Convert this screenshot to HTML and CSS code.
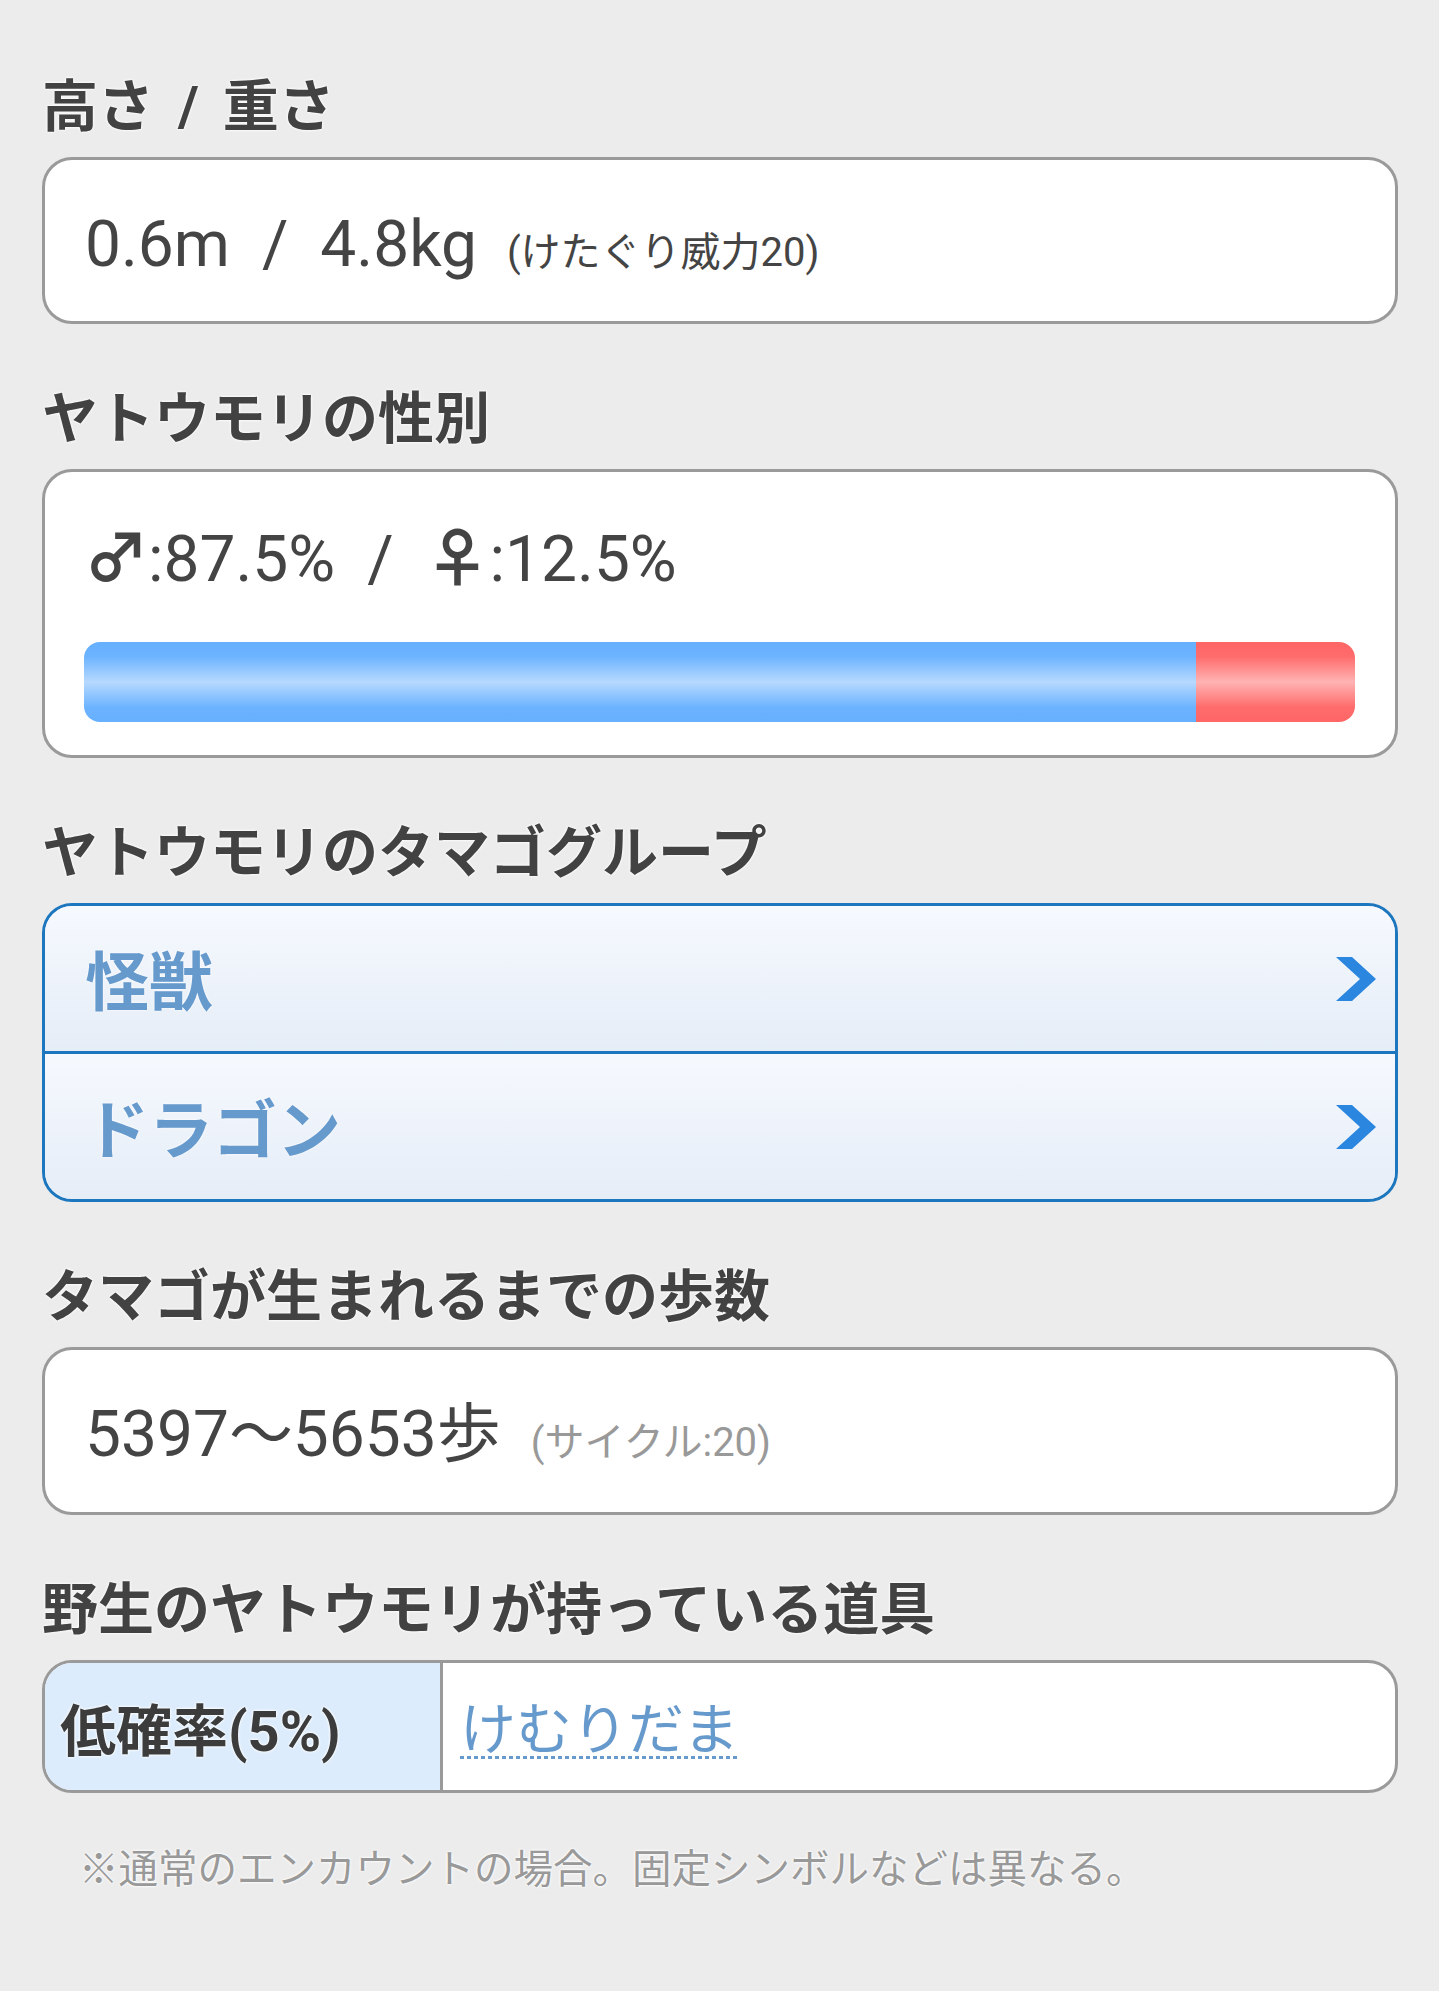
FILE: index.html
```html
<!DOCTYPE html>
<html lang="ja">
<head>
<meta charset="utf-8">
<title>ヤトウモリ</title>
<link rel="stylesheet" href="styles.css">
</head>
<body>
<div class="page">
  <section class="sec">
    <h2 class="head">高さ<span class="head-sep">/</span>重さ</h2>
    <div class="box box-text">
      <span>0.6m</span><span class="sep">/</span><span>4.8kg</span><span class="sub">(けたぐり威力20)</span>
    </div>
  </section>

  <section class="sec">
    <h2 class="head">ヤトウモリの性別</h2>
    <div class="box box-gender">
      <div class="gender-line"><span class="sym">♂</span><span>:87.5%</span><span class="sep gsep">/</span><span class="sym">♀</span><span>:12.5%</span></div>
      <div class="bar">
        <div class="bar-male" style="width:87.5%"></div>
        <div class="bar-female"></div>
      </div>
    </div>
  </section>

  <section class="sec">
    <h2 class="head">ヤトウモリのタマゴグループ</h2>
    <div class="box box-links">
      <a class="link-row" href="#">
        <span class="link-label">怪獣</span>
        <svg class="chev" width="40" height="44" viewBox="0 0 40 44"><polygon points="0,0 16,0 40,22 16,44 0,44 24,22" fill="#2b86e0"/></svg>
      </a>
      <a class="link-row" href="#">
        <span class="link-label">ドラゴン</span>
        <svg class="chev" width="40" height="44" viewBox="0 0 40 44"><polygon points="0,0 16,0 40,22 16,44 0,44 24,22" fill="#2b86e0"/></svg>
      </a>
    </div>
  </section>

  <section class="sec">
    <h2 class="head">タマゴが生まれるまでの歩数</h2>
    <div class="box box-text box-steps">
      <span>5397〜5653歩</span><span class="sub sub-gray">(サイクル:20)</span>
    </div>
  </section>

  <section class="sec">
    <h2 class="head">野生のヤトウモリが持っている道具</h2>
    <div class="box box-item">
      <div class="item-rate">低確率(5%)</div>
      <div class="item-name"><a class="item-link" href="#">けむりだま</a></div>
    </div>
  </section>

  <p class="note">※通常のエンカウントの場合。固定シンボルなどは異なる。</p>
</div>
</body>
</html>
```

FILE: styles.css
```css
html, body {
  margin: 0;
  padding: 0;
  background: #ececec;
}

body {
  font-family: Roboto, "Noto Sans CJK JP", sans-serif;
  color: #444;
}

.page {
  padding: 68px 41px 40px 42px;
}

.sec + .sec {
  margin-top: 56px;
}

.head {
  margin: 0 0 14px;
  padding-top: 3px;
  font-size: 56px;
  line-height: 72px;
  font-weight: 700;
  color: #424242;
  text-shadow: 0 0 3px #fff, 0 0 3px #fff;
}

.head-sep {
  margin: 0 24px;
}

.box {
  background: #fff;
  border: 3px solid #9a9a9a;
  border-radius: 30px;
  overflow: hidden;
}

.box-text {
  padding: 45px 40px 36px;
  font-size: 64px;
  line-height: 80px;
  white-space: nowrap;
}

.box-steps {
  padding-bottom: 37px;
}

.sep {
  margin: 0 32px;
}

.sub {
  margin-left: 30px;
  font-size: 40px;
  line-height: 1;
  color: #444;
}

.sub-gray {
  color: #999;
}

.box-gender {
  padding: 48px 40px 33px 39px;
}

.gender-line {
  font-size: 64px;
  line-height: 80px;
  white-space: nowrap;
}

.sym {
  font-family: "Noto Sans CJK JP", sans-serif;
  font-weight: 700;
  line-height: 1;
}

.gsep {
  margin: 0 32px;
}

.bar {
  display: flex;
  height: 80px;
  margin-top: 42px;
  border-radius: 16px;
  overflow: hidden;
}

.bar-male {
  height: 100%;
  background: linear-gradient(#66b0ff 0%, #6cb3ff 18%, #b6d9ff 50%, #6cb3ff 82%, #66b0ff 100%);
}

.bar-female {
  flex: 1;
  height: 100%;
  background: linear-gradient(#ff6666 0%, #ff6b6b 18%, #ffb3b3 50%, #ff6b6b 82%, #ff6666 100%);
}

.box-links {
  border-color: #1c77bf;
  background: transparent;
}

.link-row {
  display: flex;
  align-items: center;
  justify-content: space-between;
  height: 145px;
  padding: 0 19px 0 40px;
  text-decoration: none;
  background: linear-gradient(#f6f9fe, #e5edf7);
}

.link-row + .link-row {
  border-top: 3px solid #1c77bf;
}

.link-label {
  padding-top: 10px;
  font-size: 64px;
  line-height: 80px;
  font-weight: 700;
  color: #6699cc;
  text-shadow: 0 0 3px #fff;
}

.chev {
  display: block;
  flex: none;
}

.box-item {
  display: flex;
  height: 127px;
}

.item-rate {
  display: flex;
  align-items: center;
  width: 380px;
  padding-left: 15px;
  background: #dcecfc;
  border-right: 3px solid #9a9a9a;
  font-size: 56px;
  font-weight: 700;
  color: #3c3c3c;
  text-shadow: 0 0 3px #fff, 0 0 3px #fff;
  white-space: nowrap;
}

.item-name {
  display: flex;
  align-items: center;
  padding-left: 17px;
  font-size: 56px;
}

.item-link {
  display: block;
  margin-top: 8px;
  padding-bottom: 1px;
  line-height: 56px;
  color: #6699cc;
  text-decoration: none;
  background: linear-gradient(to right, #6699cc 57%, transparent 57%) left bottom / 7px 3px repeat-x;
}

.note {
  margin: 49px 0 0 37px;
  font-size: 39.5px;
  line-height: 56px;
  color: #999;
  text-shadow: 0 0 3px #fff, 0 0 3px #fff;
  white-space: nowrap;
}
```
